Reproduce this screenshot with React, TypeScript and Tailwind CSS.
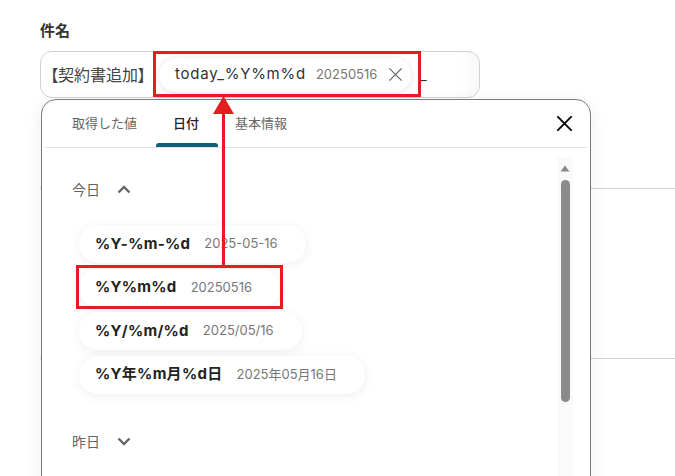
const formats = [
  { key: "%Y-%m-%d", value: "2025-05-16" },
  { key: "%Y%m%d", value: "20250516" },
  { key: "%Y/%m/%d", value: "2025/05/16" },
  { key: "%Y年%m月%d日", value: "2025年05月16日" },
];

const tabs = ["取得した値", "日付", "基本情報"];

function Cross({ size, stroke, className }: { size: number; stroke: number; className?: string }) {
  return (
    <svg width={size} height={size} viewBox="0 0 16 16" className={className}>
      <path d="M1 1 L15 15 M15 1 L1 15" stroke="currentColor" strokeWidth={stroke} strokeLinecap="square" fill="none" />
    </svg>
  );
}

function Chevron({ up }: { up?: boolean }) {
  return (
    <svg width="14" height="9" viewBox="0 0 14 9" className="ml-[17px] text-[#666]">
      <path
        d={up ? "M1.5 7.5 L7 2 L12.5 7.5" : "M1.5 1.5 L7 7 L12.5 1.5"}
        stroke="currentColor"
        strokeWidth={2.4}
        fill="none"
      />
    </svg>
  );
}

export default function App() {
  return (
    <div className="relative h-[476px] w-[675px] overflow-hidden bg-white font-['Inter','Noto_Sans_CJK_JP',sans-serif] text-[#333]">
      {/* form behind the popup */}
      <div className="pt-[20px]">
        <div className="px-[40px]">
          <label className="block h-[22px] text-[15px] font-bold leading-[22px]">件名</label>
          <div className="mt-[9px] flex h-[47px] w-[440px] items-center rounded-[12px] border border-[#d2d2d2] pl-[9px] shadow-[inset_-30px_0_20px_-20px_rgba(0,0,0,0.03)]">
            <span className="w-[109px] shrink-0 whitespace-nowrap text-[16px] text-[#444] [font-feature-settings:'palt']">【契約書追加】</span>
            <span className="flex h-[34px] items-center rounded-full bg-white pl-[16px] pr-[9px] shadow-[0_1px_6px_rgba(0,0,0,0.12)]">
              <span className="text-[15px] tracking-[0.05em] text-[#333]">today_%Y%m%d</span>
              <span className="ml-[10px] text-[13px] text-[#777]">20250516</span>
              <Cross size={13} stroke={1.5} className="ml-[12px] text-[#666]" />
            </span>
            <span className="ml-[9px] text-[14px] text-[#333]">_</span>
          </div>
        </div>
        <div className="ml-[40px] mt-[90px] border-t border-[#d4d4d4]" />
        <div className="ml-[40px] mt-[169px] border-t border-[#d4d4d4]" />
      </div>

      {/* popup */}
      <div className="absolute left-[41px] top-[99px] flex h-[400px] w-[550px] flex-col rounded-t-[15px] border border-[#7a7a7a] bg-white shadow-[0_4px_16px_rgba(0,0,0,0.08)]">
        <div className="mx-[3px] flex h-[48px] items-stretch border-b border-[#e2e2e2] pl-[9px]">
          {tabs.map((t) => (
            <div
              key={t}
              className={`relative flex items-center px-[18px] text-[13px] ${t === "日付" ? "font-medium text-[#222]" : "text-[#666]"}`}
            >
              {t}
              {t === "日付" && (
                <span className="absolute bottom-0 left-[1px] right-[-1px] h-[4px] rounded-t-[3px] bg-[#0f5f78]" />
              )}
            </div>
          ))}
          <button className="ml-auto mr-[15px] flex items-center">
            <Cross size={15} stroke={2} className="text-black" />
          </button>
        </div>

        <div className="flex flex-1">
          <div className="flex-1 pl-[30px] pt-[31px]">
            <div className="flex h-[20px] items-center text-[14px] text-[#666]">
              今日
              <Chevron up />
            </div>
            <div className="ml-[7px] mt-[26px] flex flex-col gap-[5.5px]">
              {formats.map((f) => (
                <div
                  key={f.key}
                  className="flex h-[38px] w-fit items-center gap-[14px] rounded-full bg-white pl-[16px] pr-[28px] shadow-[0_2px_12px_rgba(0,0,0,0.07)]"
                >
                  <span className="text-[15px] font-bold tracking-[0.02em] text-[#222]">{f.key}</span>
                  <span className="text-[13px] text-[#777]">{f.value}</span>
                </div>
              ))}
            </div>
            <div className="mt-[38px] flex h-[20px] items-center text-[14px] text-[#666]">
              昨日
              <Chevron />
            </div>
          </div>

          <div className="mr-[17px] mt-[9px] flex w-[16px] flex-col items-center bg-[#fafafa]">
            <svg width="10" height="7" viewBox="0 0 10 7" className="mt-[8px]">
              <path d="M5 0.5 L9.5 6.5 L0.5 6.5 Z" fill="#8a8a8a" />
            </svg>
            <div className="mt-[8px] h-[222px] w-[9px] rounded-full bg-[#8a8a8a]" />
          </div>
        </div>
      </div>

      {/* annotations */}
      <div className="absolute left-[153px] top-[51px] h-[46px] w-[268px] border-[3px] border-[#e41e20]" />
      <div className="absolute left-[76px] top-[265px] h-[44px] w-[207px] border-[3px] border-[#e41e20]" />
      <div className="absolute left-[222px] top-[110px] h-[155px] w-[3px] bg-[#e41e20]" />
      <svg className="absolute left-[213px] top-[96px]" width="21" height="18" viewBox="0 0 21 18">
        <path d="M10.5 0 L21 18 L0 18 Z" fill="#e41e20" />
      </svg>
    </div>
  );
}
